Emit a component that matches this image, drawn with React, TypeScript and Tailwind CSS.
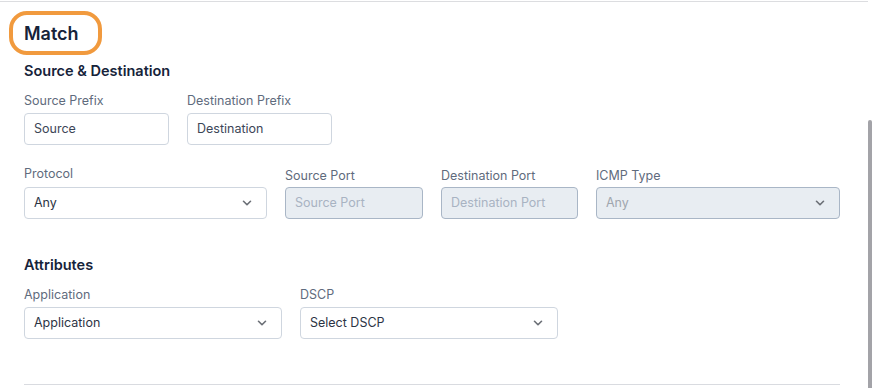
import { ChevronDown } from "lucide-react";

const font = { fontFamily: "Inter, 'Noto Sans', sans-serif" };

function Label({ text, className = "" }: { text: string; className?: string }) {
  return <div className={`text-[12.5px] leading-[16px] text-[#5f6b7d] ${className}`}>{text}</div>;
}

function TextInput({ value, width, disabled }: { value: string; width: string; disabled?: boolean }) {
  return (
    <div
      className={`${width} h-[32px] rounded-[4px] border flex items-center px-[9px] text-[12.5px] ${
        disabled ? "bg-[#e8edf2] border-[#a9b6c6] text-[#a8b3c2]" : "bg-white border-[#cfd6df] text-[#3c4657]"
      }`}
    >
      {value}
    </div>
  );
}

function Select({ value, width, disabled }: { value: string; width: string; disabled?: boolean }) {
  return (
    <div
      className={`${width} h-[32px] rounded-[4px] border flex items-center justify-between pl-[9px] pr-[12px] text-[12.5px] ${
        disabled ? "bg-[#e8edf2] border-[#a9b6c6] text-[#a0a6ae]" : "bg-white border-[#cfd6df] text-[#2c3444]"
      }`}
    >
      <span>{value}</span>
      <ChevronDown size={14} strokeWidth={2.8} className="text-[#6b6f76]" />
    </div>
  );
}

export default function App() {
  return (
    <div className="w-[872px] h-[388px] bg-white flex overflow-hidden" style={font}>
      <div className="flex-1 flex flex-col">
        <div className="mt-px h-px w-[868px] bg-[#dcdde0]" />
        {/* heading */}
        <div className="ml-[9px] mt-[9px] w-[93px] h-[44px] rounded-[18px] border-[4px] border-[#f19a3e] flex items-center pl-[11px]">
          <span className="text-[18px] font-semibold text-[#16233a]">Match</span>
        </div>

        <div className="pl-[24px] flex flex-col">
          <div className="mt-[7px] text-[14.5px] font-semibold text-[#16233a] leading-[18px]">Source &amp; Destination</div>

          <div className="mt-[13px] flex gap-[18px]">
            <div className="flex flex-col gap-[4px]">
              <Label text="Source Prefix" />
              <TextInput value="Source" width="w-[145px]" />
            </div>
            <div className="flex flex-col gap-[4px]">
              <Label text="Destination Prefix" />
              <TextInput value="Destination" width="w-[145px]" />
            </div>
          </div>

          <div className="mt-[21px] flex gap-[18px] items-end">
            <div className="flex flex-col gap-[5px]">
              <Label text="Protocol" />
              <Select value="Any" width="w-[243px]" />
            </div>
            <div className="flex flex-col gap-[3px]">
              <Label text="Source Port" />
              <TextInput value="Source Port" width="w-[138px]" disabled />
            </div>
            <div className="flex flex-col gap-[3px]">
              <Label text="Destination Port" />
              <TextInput value="Destination Port" width="w-[137px]" disabled />
            </div>
            <div className="flex flex-col gap-[3px]">
              <Label text="ICMP Type" />
              <Select value="Any" width="w-[244px]" disabled />
            </div>
          </div>

          <div className="mt-[37px] text-[14.5px] font-semibold text-[#16233a] leading-[18px]">Attributes</div>

          <div className="mt-[13px] flex gap-[18px]">
            <div className="flex flex-col gap-[4px]">
              <Label text="Application" />
              <Select value="Application" width="w-[258px]" />
            </div>
            <div className="flex flex-col gap-[4px]">
              <Label text="DSCP" />
              <Select value="Select DSCP" width="w-[258px]" />
            </div>
          </div>

          <div className="mt-[45px] h-px w-[816px] bg-[#d9dbe0]" />
        </div>
      </div>
      <div className="w-[8px] flex flex-col">
        <div className="mt-[120px] flex-1 rounded-t-full bg-[#a3a3a8]" />
      </div>
    </div>
  );
}
